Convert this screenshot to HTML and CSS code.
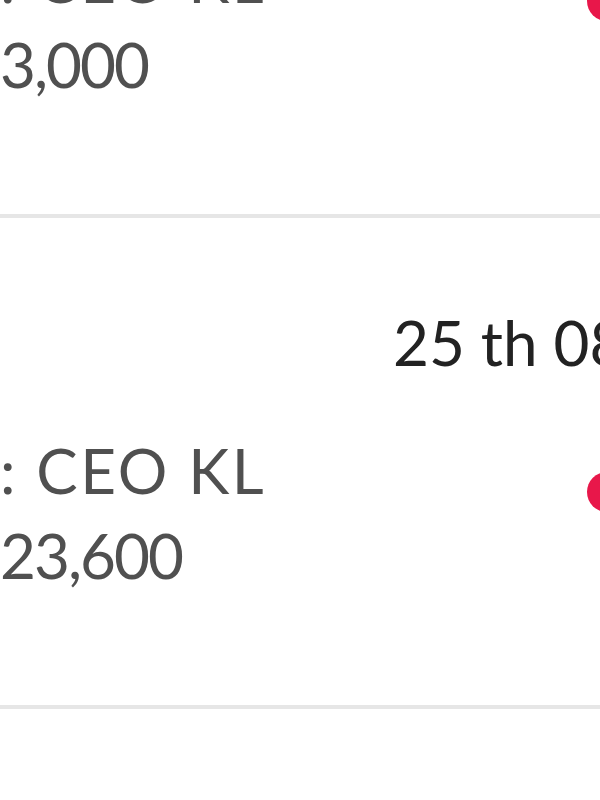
FILE: index.html
```html
<!DOCTYPE html>
<html lang="en">
<head>
    <meta charset="UTF-8">
    <meta name="viewport" content="width=device-width, initial-scale=1.0">
    <title>Transactions</title>
    <link rel="stylesheet" href="styles.css">
</head>
<body>
    <!-- Transaction list (zoomed in) -->
    <div class="list">
        <div class="row">
            <div class="date">24 th 08 2019</div>
            <div class="body">
                <div class="info">
                    <div class="name">: CEO KL</div>
                    <div class="amount">3,000</div>
                </div>
                <span class="dot"></span>
            </div>
        </div>
        <div class="row">
            <div class="date">25 th 08 2019</div>
            <div class="body">
                <div class="info">
                    <div class="name">: CEO KL</div>
                    <div class="amount">23,600</div>
                </div>
                <span class="dot"></span>
            </div>
        </div>
        <div class="row">
            <div class="date">26 th 08 2019</div>
            <div class="body">
                <div class="info">
                    <div class="name">: CEO KL</div>
                    <div class="amount">12,400</div>
                </div>
                <span class="dot"></span>
            </div>
        </div>
    </div>
</body>
</html>
```

FILE: styles.css
```css
/* General */
html, body {
    margin: 0;
    padding: 0;
    height: 800px;
    overflow: hidden;
    background-color: #ffffff;
    font-family: Lato, "Noto Sans", sans-serif;
}

/* List */
.list {
    margin-top: -273px;
    margin-left: -200px;
    width: 850px;
}
.row {
    padding: 82px 23px 107px 0;
    border-bottom: 4px solid #e6e6e6;
    font-size: 62px;
    line-height: 85px;
    white-space: nowrap;
}
.date {
    padding-left: 593px;
    color: #222222;
    margin-bottom: 43px;
}
.body {
    display: flex;
    justify-content: space-between;
    align-items: flex-start;
}
.info {
    padding-left: 200px;
    color: #505050;
}
.name {
    letter-spacing: 2.5px;
}
.amount {
    letter-spacing: -2px;
}
.dot {
    width: 40px;
    height: 40px;
    margin-top: 44px;
    border-radius: 50%;
    background-color: #e8174a;
}
```
